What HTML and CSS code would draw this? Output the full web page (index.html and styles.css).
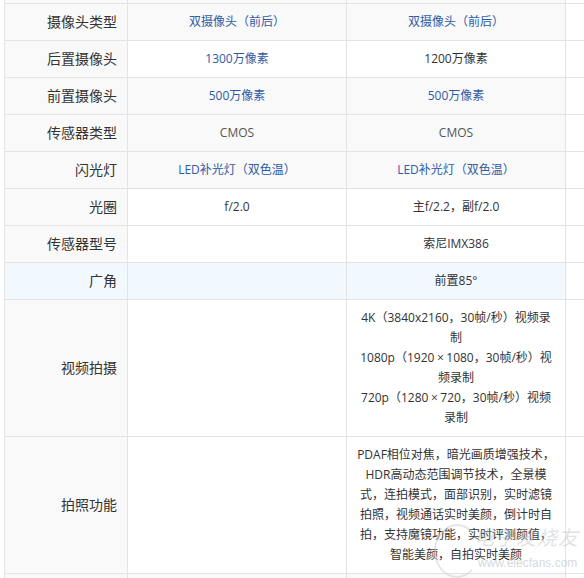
FILE: index.html
```html
<!DOCTYPE html>
<html lang="zh-CN">
<head>
<meta charset="utf-8">
<title>摄像头参数对比</title>
<link rel="stylesheet" href="styles.css">
</head>
<body>
<div class="page">
<table class="spec">
  <colgroup>
    <col class="c-label"><col class="c-data"><col class="c-data"><col class="c-extra">
  </colgroup>
  <tr class="stub gray"><td></td><td></td><td></td><td class="extra"></td></tr>
  <tr class="gray">
    <td class="label">摄像头类型</td>
    <td class="blue">双摄像头（前后）</td>
    <td class="blue">双摄像头（前后）</td>
    <td class="extra"></td>
  </tr>
  <tr>
    <td class="label">后置摄像头</td>
    <td class="blue">1300万像素</td>
    <td>1200万像素</td>
    <td class="extra"></td>
  </tr>
  <tr class="gray">
    <td class="label">前置摄像头</td>
    <td class="blue">500万像素</td>
    <td class="blue">500万像素</td>
    <td class="extra"></td>
  </tr>
  <tr class="gray">
    <td class="label">传感器类型</td>
    <td class="muted">CMOS</td>
    <td class="muted">CMOS</td>
    <td class="extra"></td>
  </tr>
  <tr class="gray">
    <td class="label">闪光灯</td>
    <td class="blue">LED补光灯（双色温）</td>
    <td class="blue">LED补光灯（双色温）</td>
    <td class="extra"></td>
  </tr>
  <tr>
    <td class="label">光圈</td>
    <td>f/2.0</td>
    <td>主f/2.2，副f/2.0</td>
    <td class="extra"></td>
  </tr>
  <tr>
    <td class="label">传感器型号</td>
    <td></td>
    <td>索尼IMX386</td>
    <td class="extra"></td>
  </tr>
  <tr class="hl">
    <td class="label">广角</td>
    <td></td>
    <td>前置85°</td>
    <td class="extra"></td>
  </tr>
  <tr>
    <td class="label">视频拍摄</td>
    <td></td>
    <td>4K（3840x2160，30帧/秒）视频录制<br>1080p（1920<span class="mul">×</span>1080，30帧/秒）视频录制<br>720p（1280<span class="mul">×</span>720，30帧/秒）视频录制</td>
    <td class="extra"></td>
  </tr>
  <tr>
    <td class="label">拍照功能</td>
    <td></td>
    <td>PDAF相位对焦，暗光画质增强技术，HDR高动态范围调节技术，全景模式，连拍模式，面部识别，实时滤镜拍照，视频通话实时美颜，倒计时自拍，支持魔镜功能，实时评测颜值，智能美颜，自拍实时美颜</td>
    <td class="extra"></td>
  </tr>
  <tr class="gray">
    <td class="label">&nbsp;</td>
    <td></td>
    <td></td>
    <td class="extra"></td>
  </tr>
</table>
<div class="watermark">
  <span class="wm-circle"></span>
  <span class="wm-name">电子发烧友</span>
  <span class="wm-url">www.elecfans.com</span>
</div>
</div>
</body>
</html>
```

FILE: styles.css
```css
html, body {
  margin: 0;
  padding: 0;
  background: #fff;
}
body {
  width: 584px;
  height: 578px;
  overflow: hidden;
}
.page {
  position: relative;
  width: 584px;
  height: 578px;
  overflow: hidden;
}
.spec {
  border-collapse: collapse;
  table-layout: fixed;
  width: 680px;
  margin-left: 4px;
  font-family: "Open Sans", "Noto Sans CJK SC", sans-serif;
  font-size: 12px;
  line-height: 20px;
  color: #333;
}
.c-label { width: 123px; }
.c-data { width: 219px; }
.c-extra { width: 119px; }
.spec td {
  border: 1px solid #e3e3e3;
  padding: 8px 9px;
  text-align: center;
  vertical-align: middle;
  background: #fff;
}
.spec tr.gray td { background: #f9f9f9; }
.spec tr.hl td { background: #f1f8fe; }
.spec td.label {
  background: #f9f9f9;
  text-align: right;
  font-size: 14px;
  padding-right: 10px;
  color: #333;
}
.spec td.extra { background: #fff !important; }
.spec tr.stub td {
  height: 3px;
  padding: 0;
  border-top: 0;
  line-height: 0;
}
.blue { color: #2f5ba6; }
.muted { color: #555; }
.mul { margin: 0 2.5px; }

.watermark {
  position: absolute;
  left: 430px;
  top: 518px;
  width: 154px;
  height: 60px;
  pointer-events: none;
}
.wm-circle {
  position: absolute;
  left: 4px;
  top: 6px;
  width: 42px;
  height: 50px;
  border: 2px solid rgba(205, 205, 205, 0.5);
  border-radius: 50%;
  border-right-color: transparent;
}
.wm-name {
  position: absolute;
  left: 44px;
  top: 6px;
  font-family: "Noto Sans CJK SC", sans-serif;
  font-style: italic;
  font-size: 20px;
  line-height: 26px;
  letter-spacing: 1px;
  color: rgba(190, 190, 190, 0.45);
}
.wm-url {
  position: absolute;
  left: 48px;
  top: 38px;
  font-family: "Liberation Sans", sans-serif;
  font-size: 12px;
  line-height: 14px;
  color: rgba(190, 190, 190, 0.6);
}
```
